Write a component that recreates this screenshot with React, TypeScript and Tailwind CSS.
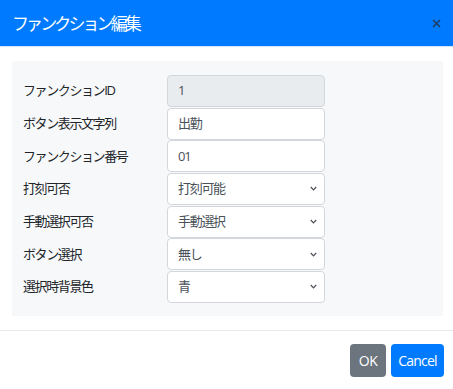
import React from 'react';

type Field = {
  id: string;
  label: string;
  value: string;
  kind: 'disabled' | 'text' | 'select';
};

const fields: Field[] = [
  { id: 'functionId', label: 'ファンクションID', value: '1', kind: 'disabled' },
  { id: 'buttonText', label: 'ボタン表示文字列', value: '出勤', kind: 'text' },
  { id: 'functionNo', label: 'ファンクション番号', value: '01', kind: 'text' },
  { id: 'stamp', label: '打刻可否', value: '打刻可能', kind: 'select' },
  { id: 'manual', label: '手動選択可否', value: '手動選択', kind: 'select' },
  { id: 'buttonSelect', label: 'ボタン選択', value: '無し', kind: 'select' },
  { id: 'bgColor', label: '選択時背景色', value: '青', kind: 'select' },
];

const Chevron = () => (
  <svg width="7" height="5" viewBox="0 0 7 5" className="shrink-0">
    <path d="M0.8 1 L3.5 3.8 L6.2 1" fill="none" stroke="#4b5057" strokeWidth="1.2" />
  </svg>
);

const App: React.FC = () => {
  return (
    <div
      className="w-[453px] h-[389px] bg-white flex flex-col overflow-hidden"
      style={{ fontFamily: '"Open Sans", "Noto Sans CJK JP", sans-serif' }}
    >
      {/* Header */}
      <div className="h-[47px] shrink-0 bg-[#007bff] border-b border-[#cfe4ff] flex items-center justify-between pl-3 pr-[12px]">
        <h1 className="text-white text-[17px] tracking-[-2.9px] leading-none">ファンクション編集</h1>
        <svg width="9" height="9" viewBox="0 0 9 9" className="mt-[1px]">
          <path d="M1 1 L8 8 M8 1 L1 8" stroke="#1d3d66" strokeWidth="1.6" />
        </svg>
      </div>

      {/* Body */}
      <div className="pt-[14px] pl-3 pr-[10px] pb-[14px]">
        <div className="bg-[#f7f8fa] h-[255px] pt-[14px] pl-[11px] flex flex-col gap-y-[0.67px]">
          {fields.map((f) => (
            <div key={f.id} className="flex items-center">
              <label className="w-[144px] shrink-0 text-[13px] tracking-[-1.4px] text-[#212529]">{f.label}</label>
              <div
                className={`w-[158px] h-[32px] rounded-[4px] border border-[#d3d7db] flex items-center justify-between pl-[10px] pr-[7px] text-[13px] tracking-[-1.3px] text-[#495057] ${
                  f.kind === 'disabled' ? 'bg-[#e9ecef]' : 'bg-white'
                }`}
              >
                <span>{f.value}</span>
                {f.kind === 'select' && <Chevron />}
              </div>
            </div>
          ))}
        </div>
      </div>

      {/* Footer */}
      <div className="border-t border-[#e6e8eb] flex justify-end gap-[5px] pt-[13px] pr-[9px]">
        <button className="h-[33px] w-[36px] rounded-[4px] bg-[#6c757d] text-white text-[14px] tracking-[-0.6px]">OK</button>
        <button className="h-[33px] w-[53px] rounded-[4px] bg-[#007bff] text-white text-[14px] tracking-[-0.8px]">Cancel</button>
      </div>
    </div>
  );
};

export default App;
